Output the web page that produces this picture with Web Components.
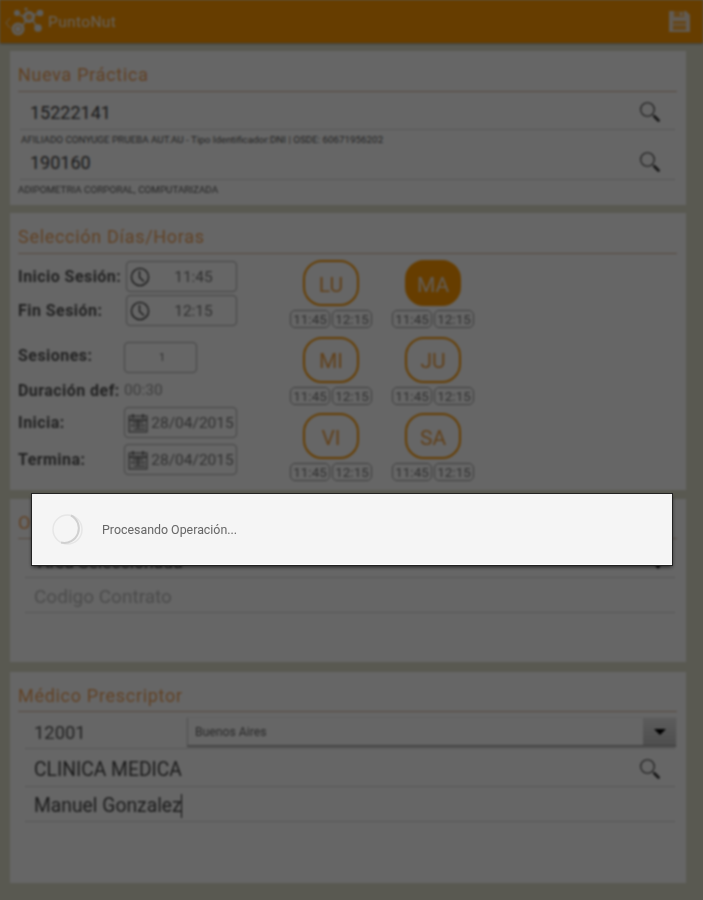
<!DOCTYPE html>
<html>
<head>
<meta charset="utf-8">
<title>PuntoNut</title>
<style>
    html, body { margin: 0; height: 100%; overflow: hidden; background: #dfdfcb; }
    body { font-family: Roboto, "Liberation Sans", sans-serif; }
</style>
</head>
<body>

<pn-app>
    <pn-header></pn-header>

    <pn-card heading="Nueva Práctica" style="height:154px; --head:41px">
        <pn-field value="15222141" search style="height:38px"></pn-field>
        <pn-hint indent="3">AFILIADO CONYUGE PRUEBA AUT.AU - Tipo Identificador:DNI | OSDE: 60671956202</pn-hint>
        <pn-field value="190160" search style="height:38px"></pn-field>
        <pn-hint>ADIPOMETRIA CORPORAL, COMPUTARIZADA</pn-hint>
    </pn-card>

    <pn-card heading="Selección Días/Horas" style="height:277px; --head:41px">
        <pn-schedule>
            <pn-form-row label="Inicio Sesión:" icon="clock" value="11:45" narrow slot="left"></pn-form-row>
            <pn-form-row label="Fin Sesión:" icon="clock" value="12:15" narrow slot="left"></pn-form-row>
            <pn-form-row label="Sesiones:" value="1" small slot="left" style="margin-top:13px"></pn-form-row>
            <pn-form-row label="Duración def:" text="00:30" slot="left"></pn-form-row>
            <pn-form-row label="Inicia:" icon="calendar" value="28/04/2015" slot="left"></pn-form-row>
            <pn-form-row label="Termina:" icon="calendar" value="28/04/2015" slot="left" style="margin-top:3px"></pn-form-row>

            <pn-day name="LU" slot="right"></pn-day>
            <pn-day name="MA" active slot="right"></pn-day>
            <pn-day name="MI" slot="right"></pn-day>
            <pn-day name="JU" slot="right"></pn-day>
            <pn-day name="VI" slot="right"></pn-day>
            <pn-day name="SA" slot="right"></pn-day>
        </pn-schedule>
    </pn-card>

    <pn-card heading="Obra Social" style="height:163px; margin-top:1px; --field-left:5px; --field-font:19px">
        <pn-field value="Área Seleccionada" arrow style="height:39px; padding-top:8px; padding-left:13px; font-size:17.5px"></pn-field>
        <pn-field value="Codigo Contrato" placeholder style="height:35px"></pn-field>
    </pn-card>

    <pn-card heading="Médico Prescriptor" style="height:211px; margin-top:2px; --field-left:5px; --field-font:19.3px">
        <pn-doctor-row></pn-doctor-row>
        <pn-field value="CLINICA MEDICA" search style="height:38px"></pn-field>
        <pn-field value="Manuel Gonzalez" caret style="height:35px"></pn-field>
    </pn-card>

    <pn-overlay slot="top">Procesando Operación...</pn-overlay>
</pn-app>

<script>
const SEARCH_ICON = `
    <svg width="22" height="22" viewBox="0 0 22 22" fill="none">
        <circle cx="8.5" cy="8.5" r="6.8" stroke="#333" stroke-width="1.1"/>
        <path d="M13.5 13.5 L20 20" stroke="#444" stroke-width="1"/>
        <path d="M15.5 15.5 L19.5 19.5" stroke="#333" stroke-width="2.8" stroke-linecap="round"/>
    </svg>`;

const CLOCK_ICON = `
    <svg width="20" height="20" viewBox="0 0 20 20" fill="none" stroke="#333" stroke-width="1.3">
        <circle cx="10" cy="10" r="8.6"/>
        <path d="M9.5 4 V10.5 L14 14.5"/>
    </svg>`;

const CALENDAR_ICON = `
    <svg width="20" height="20" viewBox="0 0 20 20" fill="none" stroke="#555" stroke-width="1">
        <rect x="1" y="3" width="18" height="16" fill="#e8e8e8"/>
        <path d="M5 1 V5 M15 1 V5 M1 7 H19" stroke-width="1.4"/>
        <path d="M5 9.5 H15 M10 7 V16 M3 12.5 H17 M6 16 H17"/>
    </svg>`;

class PnApp extends HTMLElement {
    constructor() {
        super();
        this.attachShadow({ mode: "open" });
        this.shadowRoot.innerHTML = `
            <style>
                :host { display: block; position: relative; width: 703px; height: 900px; overflow: hidden; }
                .page {
                    display: flex;
                    flex-direction: column;
                    gap: 8px;
                    height: 900px;
                    filter: blur(.8px);
                }
            </style>
            <div class="page"><slot></slot></div>
            <slot name="top"></slot>
        `;
    }
}

class PnHeader extends HTMLElement {
    constructor() {
        super();
        this.attachShadow({ mode: "open" });
        this.shadowRoot.innerHTML = `
            <style>
                :host {
                    display: flex;
                    align-items: center;
                    flex: none;
                    height: 43px;
                    background: #ff9900;
                    box-shadow: 0 1px 2px rgba(0,0,0,.35);
                    padding: 0 13px 0 5px;
                }
                .title { font-size: 15.5px; margin-left: 4px; letter-spacing: .35px; color: #fff4e6; }
                .save { margin-left: auto; display: flex; }
            </style>
            <svg width="39" height="36" viewBox="0 0 39 36" fill="none">
                <path d="M5 14 L1 19 L5 24" stroke="#f3e3cf" stroke-width="1"/>
                <circle cx="13" cy="25" r="6.5" fill="#ecebe6"/>
                <circle cx="13" cy="25" r="3.5" fill="none" stroke="#ffb040"/>
                <circle cx="24" cy="13" r="6" fill="#ecebe6"/>
                <circle cx="24" cy="13" r="3" fill="#ffb040"/>
                <circle cx="12" cy="9" r="3" fill="#ecebe6"/>
                <circle cx="35" cy="9" r="3.3" fill="#ecebe6"/>
                <circle cx="33" cy="24" r="3.8" fill="#ecebe6"/>
                <circle cx="21" cy="5" r="1.6" fill="#ecebe6"/>
                <path d="M15 11 L20 13 M17 22 L21 17 M28 16 L31 22 M28 11 L33 10" stroke="#ecebe6" stroke-width="1.5"/>
            </svg>
            <span class="title">PuntoNut</span>
            <span class="save">
                <svg width="21" height="21" viewBox="0 0 21 21">
                    <path d="M0 0 H17 L21 4 V21 H0 Z" fill="#f3e3cf"/>
                    <rect x="5" y="0" width="10" height="6" fill="#ffb040"/>
                    <rect x="11" y="1" width="2.4" height="4" fill="#f3e3cf"/>
                    <rect x="4" y="10" width="13" height="9" fill="#ffb040"/>
                    <rect x="4" y="13" width="13" height="1.2" fill="#f3e3cf"/>
                </svg>
            </span>
        `;
    }
}

class PnCard extends HTMLElement {
    constructor() {
        super();
        this.attachShadow({ mode: "open" });
        this.shadowRoot.innerHTML = `
            <style>
                :host {
                    display: block;
                    box-sizing: border-box;
                    flex: none;
                    margin: 0 17px 0 10px;
                    background: #fff;
                    padding: 0 9px 0 8px;
                }
                h2 {
                    margin: 0;
                    height: var(--head, 40px);
                    box-sizing: border-box;
                    padding-top: 12px;
                    font-size: 18px;
                    line-height: 23px;
                    font-weight: 400;
                    letter-spacing: .7px;
                    color: #f2a35a;
                    border-bottom: 1px solid #d9b8a0;
                }
                .body { padding: 0 2px; }
            </style>
            <h2></h2>
            <div class="body"><slot></slot></div>
        `;
    }

    connectedCallback() {
        this.shadowRoot.querySelector("h2").textContent = this.getAttribute("heading");
    }
}

class PnField extends HTMLElement {
    constructor() {
        super();
        this.attachShadow({ mode: "open" });
        this.shadowRoot.innerHTML = `
            <style>
                :host {
                    display: flex;
                    align-items: center;
                    box-sizing: border-box;
                    height: 37px;
                    margin-left: var(--field-left, 0);
                    border-bottom: 1px solid #d8d8d8;
                    padding: 3px 14px 0 calc(10px - var(--field-left, 0px) + var(--field-left, 0px) * .8);
                    font-size: var(--field-font, 18px);
                    color: #444;
                }
                :host([placeholder]) { color: #bbb; }
                .value { white-space: pre; }
                .caret { display: none; width: 1px; height: 24px; background: #222; margin-left: -1px; }
                :host([caret]) .caret { display: block; }
                .icon { margin-left: auto; display: flex; }
                :host([arrow]) .icon {
                    align-self: flex-end;
                    margin-bottom: 8px;
                    border-top: 4px solid #000;
                    border-left: 3px solid transparent;
                    border-right: 3px solid transparent;
                }
            </style>
            <span class="value"></span><span class="caret"></span>
            <span class="icon"></span>
        `;
    }

    connectedCallback() {
        this.shadowRoot.querySelector(".value").textContent = this.getAttribute("value");
        if (this.hasAttribute("search")) {
            this.shadowRoot.querySelector(".icon").innerHTML = SEARCH_ICON;
        }
    }
}

class PnHint extends HTMLElement {
    constructor() {
        super();
        this.attachShadow({ mode: "open" });
        this.shadowRoot.innerHTML = `
            <style>
                :host {
                    display: block;
                    height: 12px;
                    margin-left: -2px;
                    font-size: 9.8px;
                    line-height: 19px;
                    color: #555;
                    white-space: nowrap;
                }
            </style>
            <slot></slot>
        `;
    }

    connectedCallback() {
        this.style.paddingLeft = (this.getAttribute("indent") || 0) + "px";
    }
}

class PnSchedule extends HTMLElement {
    constructor() {
        super();
        this.attachShadow({ mode: "open" });
        this.shadowRoot.innerHTML = `
            <style>
                :host { display: flex; padding-top: 7px; margin-left: -2px; }
                .left { width: 271px; flex: none; display: flex; flex-direction: column; gap: 3px; }
                .right { display: grid; grid-template-columns: 102px 102px; row-gap: 8.7px; align-content: start; margin-top: -1px; }
            </style>
            <div class="left"><slot name="left"></slot></div>
            <div class="right"><slot name="right"></slot></div>
        `;
    }
}

class PnFormRow extends HTMLElement {
    constructor() {
        super();
        this.attachShadow({ mode: "open" });
        this.shadowRoot.innerHTML = `
            <style>
                :host { display: flex; align-items: center; min-height: 31px; }
                .label { width: 106px; flex: none; font-size: 16px; font-weight: 700; color: #555; letter-spacing: .45px; white-space: nowrap; }
                :host([small]) .label { padding-bottom: 4px; }
                .box {
                    display: flex;
                    align-items: center;
                    box-sizing: border-box;
                    width: 113px;
                    height: 31px;
                    border: 1px solid #aaa;
                    border-radius: 4px;
                    padding: 0 0 0 3px;
                    font-size: 15.5px;
                    color: #777;
                }
                .box svg { flex: none; margin-right: 1px; }
                .val { flex: 1; text-align: center; white-space: nowrap; }
                :host([narrow]) .box { width: 111px; margin-left: 2px; }
                :host([small]) .box { width: 73px; font-size: 11px; }
                .plain { font-size: 15.5px; color: #999; }
            </style>
            <span class="label"></span>
        `;
    }

    connectedCallback() {
        const root = this.shadowRoot;
        root.querySelector(".label").textContent = this.getAttribute("label");

        if (this.hasAttribute("text")) {
            const plain = document.createElement("span");
            plain.className = "plain";
            plain.textContent = this.getAttribute("text");
            root.appendChild(plain);
            this.style.minHeight = "28px";
            return;
        }

        const icons = { clock: CLOCK_ICON, calendar: CALENDAR_ICON };
        const box = document.createElement("div");
        box.className = "box";
        box.innerHTML = (icons[this.getAttribute("icon")] || "") + '<span class="val"></span>';
        box.querySelector(".val").textContent = this.getAttribute("value");
        root.appendChild(box);
    }
}

class PnDay extends HTMLElement {
    constructor() {
        super();
        this.attachShadow({ mode: "open" });
        this.shadowRoot.innerHTML = `
            <style>
                :host { display: flex; flex-direction: column; align-items: center; width: 84px; }
                .pill {
                    box-sizing: border-box;
                    width: 56px;
                    height: 46px;
                    padding-top: 3px;
                    border: 2px solid #ff9900;
                    border-radius: 19px;
                    color: #f2a040;
                    font-size: 21px;
                    display: flex;
                    align-items: center;
                    justify-content: center;
                }
                :host([active]) .pill { background: #ff9900; color: #f5e6d5; }
                .times { display: flex; gap: 2px; margin-top: 4px; }
                .times span {
                    box-sizing: border-box;
                    width: 40px;
                    height: 18px;
                    border: 1px solid #999;
                    border-radius: 5px;
                    font-size: 13.5px;
                    line-height: 16px;
                    text-align: center;
                    color: #777;
                }
            </style>
            <div class="pill"></div>
            <div class="times"><span>11:45</span><span>12:15</span></div>
        `;
    }

    connectedCallback() {
        this.shadowRoot.querySelector(".pill").textContent = this.getAttribute("name");
    }
}

class PnDoctorRow extends HTMLElement {
    constructor() {
        super();
        this.attachShadow({ mode: "open" });
        this.shadowRoot.innerHTML = `
            <style>
                :host {
                    display: flex;
                    align-items: flex-start;
                    height: 37px;
                    box-sizing: border-box;
                    margin-left: 5px;
                    border-bottom: 1px solid #d8d8d8;
                    padding-left: 9px;
                    font-size: 18.4px;
                    color: #555;
                }
                .code { width: 153px; flex: none; line-height: 31px; padding-top: 5px; }
                .select {
                    flex: 1;
                    display: flex;
                    align-items: stretch;
                    height: 29px;
                    box-sizing: border-box;
                    margin: 6px -1px 0 0;
                    background: #fff;
                    border-left: 1px solid #ccc;
                    border-bottom: 2px solid #aaa;
                    box-shadow: 0 0 1px #bbb;
                    font-size: 12.2px;
                    color: #666;
                }
                .select span { flex: 1; align-self: center; padding-left: 7px; }
                .arrow {
                    width: 33px;
                    background: linear-gradient(#e6e6e6, #c4c4c4);
                    display: flex;
                    align-items: center;
                    justify-content: center;
                }
                .arrow i {
                    border-top: 6px solid #000;
                    border-left: 6px solid transparent;
                    border-right: 6px solid transparent;
                    height: 0;
                }
            </style>
            <div class="code">12001</div>
            <div class="select"><span>Buenos Aires</span><div class="arrow"><i></i></div></div>
        `;
    }
}

class PnOverlay extends HTMLElement {
    constructor() {
        super();
        this.attachShadow({ mode: "open" });
        this.shadowRoot.innerHTML = `
            <style>
                :host {
                    position: absolute;
                    inset: 0;
                    background: rgba(0,0,0,.6);
                    display: block;
                }
                .dialog {
                    position: absolute;
                    left: 32px;
                    top: 494px;
                    width: 640px;
                    height: 71px;
                    box-sizing: border-box;
                    display: flex;
                    align-items: center;
                    gap: 19px;
                    padding-left: 20px;
                    background: #f5f5f5;
                    box-shadow: 0 0 0 1px #222, 0 2px 4px rgba(0,0,0,.7);
                    border-bottom: 1px solid #fff;
                    font-size: 12.4px;
                    color: #666;
                }
                .dialog span { filter: blur(.5px); }
                svg { flex: none; filter: blur(.7px); }
            </style>
            <div class="dialog">
                <svg width="31" height="31" viewBox="0 0 31 31" fill="none">
                    <circle cx="15.5" cy="15.5" r="14.5" stroke="#e6e6e6" stroke-width="1.5"/>
                    <path d="M19 1.5 A14.5 14.5 0 0 1 9 28.5" stroke="#d0d0d0" stroke-width="2"/>
                </svg>
                <span><slot></slot></span>
            </div>
        `;
    }
}

customElements.define("pn-app", PnApp);
customElements.define("pn-header", PnHeader);
customElements.define("pn-card", PnCard);
customElements.define("pn-field", PnField);
customElements.define("pn-hint", PnHint);
customElements.define("pn-schedule", PnSchedule);
customElements.define("pn-form-row", PnFormRow);
customElements.define("pn-day", PnDay);
customElements.define("pn-doctor-row", PnDoctorRow);
customElements.define("pn-overlay", PnOverlay);
</script>
</body>
</html>
